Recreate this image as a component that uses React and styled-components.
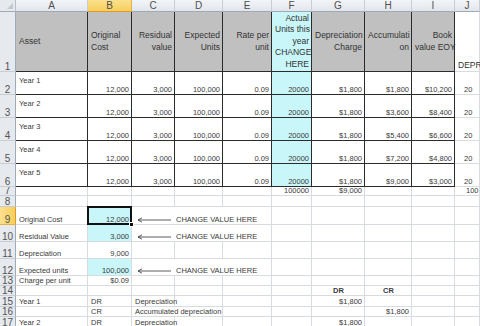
import React from "react";
import styled, { createGlobalStyle } from "styled-components";

const GlobalStyle = createGlobalStyle`
  *, *::before, *::after { box-sizing: border-box; }
  html, body { margin: 0; padding: 0; background: #fff; }
  body {
    width: 480px;
    height: 326px;
    overflow: hidden;
    font-family: "Liberation Sans", Arial, sans-serif;
  }
`;

const GRAY = "#c0c0c0";
const CYAN = "#c9f6f8";
const COLS = ["A", "B", "C", "D", "E", "F", "G", "H", "I", "J"];
const ROW_H = [60, 23, 23, 23, 23, 23, 9, 11, 18, 17, 17, 17, 10, 10, 11, 10, 11];

const Sheet = styled.div`
  display: grid;
  grid-template-columns: 16px 72px 44px 43px 48px 49px 40px 53px 47px 43px 1fr;
  grid-template-rows: 12px ${ROW_H.map((h) => h + "px").join(" ")};
  width: 480px;
  height: 326px;
  overflow: hidden;
  color: #3a3a3a;
`;

const Corner = styled.div`
  position: relative;
  background: #e6e9ed;
  border-right: 1px solid #b7bec8;
  border-bottom: 1px solid #9eaab8;

  &::after {
    content: "";
    position: absolute;
    right: 2px;
    bottom: 2px;
    border-left: 6px solid transparent;
    border-bottom: 6px solid #c3c8cf;
  }
`;

const ColHead = styled.div`
  display: flex;
  align-items: center;
  justify-content: center;
  font-size: 10px;
  line-height: 11px;
  color: #505050;
  background: ${(p) => (p.$active ? "linear-gradient(#fbe08f, #f6cf5a)" : "linear-gradient(#f2f4f7, #e2e6eb)")};
  border-right: 1px solid ${(p) => (p.$active ? "#e2b24c" : "#c8cdd4")};
  border-bottom: 1px solid ${(p) => (p.$active ? "#e09a2c" : "#9eaab8")};
`;

const RowHead = styled.div`
  display: flex;
  align-items: flex-end;
  justify-content: center;
  font-size: 10px;
  line-height: 9px;
  color: #555;
  overflow: hidden;
  background: ${(p) => (p.$active ? "linear-gradient(90deg, #fbe08f, #f6cf5a)" : "#e6e9ed")};
  border-right: 1px solid ${(p) => (p.$active ? "#e09a2c" : "#9eaab8")};
  border-bottom: 1px solid ${(p) => (p.$active ? "#e2b24c" : "#c8cdd4")};
`;

const V_ALIGN = { top: "flex-start", center: "center", bottom: "flex-end" };

const Cell = styled.div`
  position: relative;
  grid-column: span ${(p) => p.$span};
  display: flex;
  flex-direction: column;
  justify-content: ${(p) => V_ALIGN[p.$v]};
  text-align: ${(p) => p.$align};
  padding: ${(p) => (p.$v === "top" ? "4px 2px 0 3px" : "0 2px 0 3px")};
  padding-left: ${(p) => (p.$indent ? p.$indent + "px" : "3px")};
  background: ${(p) => p.$bg || "transparent"};
  border-right: 1px solid ${(p) => (p.$dark ? "#2b2b2b" : "#d8dbdf")};
  border-bottom: 1px solid ${(p) => (p.$dark ? "#2b2b2b" : "#d8dbdf")};
  font-size: 7.5px;
  line-height: 9px;
  font-weight: ${(p) => (p.$bold ? 700 : 400)};
  white-space: nowrap;
  min-width: 0;
`;

const TitleCell = styled(Cell)`
  font-size: 8.5px;
  line-height: 11.5px;
  color: #333;
`;

const Selected = styled(Cell)`
  &::after {
    content: "";
    position: absolute;
    inset: -1px;
    border: 2px solid #111;
    z-index: 2;
  }
  &::before {
    content: "";
    position: absolute;
    right: -3px;
    bottom: -3px;
    width: 5px;
    height: 5px;
    background: #111;
    border: 1px solid #fff;
    z-index: 3;
  }
`;

const Note = styled.span`
  display: flex;
  align-items: center;
  gap: 5px;
  padding-left: 2px;
`;

const Arrow = () => (
  <svg width="34" height="6" viewBox="0 0 34 6">
    <path d="M1 3H34M1 3L5 0.8M1 3L5 5.2" stroke="#333" strokeWidth="0.8" fill="none" />
  </svg>
);

const change = {
  t: (
    <Note>
      <Arrow />
      CHANGE VALUE HERE
    </Note>
  ),
  span: 3,
};

const E = {};
const r = (v) => ({ t: v, a: "right" });

const HEADER = [
  { t: ["Asset"], bg: GRAY },
  { t: ["Original", "Cost"], bg: GRAY },
  { t: ["Residual", "value"], a: "right", bg: GRAY },
  { t: ["Expected", "Units"], a: "right", bg: GRAY },
  { t: ["Rate per", "unit"], a: "right", bg: GRAY },
  { t: ["Actual", "Units this", "year", "CHANGE", "HERE"], a: "right", bg: CYAN },
  { t: ["Depreciation", "Charge"], a: "right", bg: GRAY },
  { t: ["Accumulati", "on"], a: "right", bg: GRAY },
  { t: ["Book", "value EOY"], a: "right", bg: GRAY },
  { t: ["DEPRECIATION"], v: "bottom" },
];

const YEARS = [
  ["$1,800", "$10,200"],
  ["$3,600", "$8,400"],
  ["$5,400", "$6,600"],
  ["$7,200", "$4,800"],
  ["$9,000", "$3,000"],
].map(([acc, book], i) => [
  { t: `Year ${i + 1}`, v: "top" },
  r("12,000"),
  r("3,000"),
  r("100,000"),
  r("0.09"),
  { t: "20000", a: "right", bg: CYAN },
  r("$1,800"),
  r(acc),
  r(book),
  { t: "20", indent: 9 },
]);

const ROWS = [
  ...YEARS,
  [E, E, E, E, E, r("100000"), r("$9,000"), E, E, { t: "100", indent: 11 }],
  [E, E, E, E, E, E, E, E, E, E],
  [{ t: "Original Cost" }, { t: "12,000", a: "right", bg: CYAN, sel: true }, change, E, E, E, E, E],
  [{ t: "Residual Value" }, { t: "3,000", a: "right", bg: CYAN }, change, E, E, E, E, E],
  [{ t: "Depreciation" }, r("9,000"), E, E, E, E, E, E, E, E],
  [{ t: "Expected units" }, { t: "100,000", a: "right", bg: CYAN }, change, E, E, E, E, E],
  [{ t: "Charge per unit" }, r("$0.09"), E, E, E, E, E, E, E, E],
  [E, E, E, E, E, E, { t: "DR", a: "center", bold: true }, { t: "CR", a: "center", bold: true }, E, E],
  [{ t: "Year 1" }, { t: "DR" }, { t: "Depreciation" }, E, E, E, r("$1,800"), E, E, E],
  [E, { t: "CR" }, { t: "Accumulated depreciation", span: 2 }, E, E, E, r("$1,800"), E, E],
  [{ t: "Year 2" }, { t: "DR" }, { t: "Depreciation" }, E, E, E, r("$1,800"), E, E, E],
];

const cellProps = (c, col, darkRow) => ({
  $span: c.span || 1,
  $align: c.a || "left",
  $v: c.v || "bottom",
  $bg: c.bg,
  $bold: c.bold,
  $indent: c.indent,
  $dark: darkRow && col < 9,
});

const App = () => {
  return (
    <>
      <GlobalStyle />
      <Sheet>
        <Corner />
        {COLS.map((c) => (
          <ColHead key={c} $active={c === "B"}>
            {c}
          </ColHead>
        ))}

        <RowHead>1</RowHead>
        {HEADER.map((c, i) => (
          <TitleCell key={i} {...cellProps({ v: "center", ...c }, i, true)}>
            {c.t.map((line, j) => (
              <div key={j}>{line}</div>
            ))}
          </TitleCell>
        ))}

        {ROWS.map((row, ri) => {
          const num = ri + 2;
          const darkRow = num <= 6;
          let col = 0;
          return (
            <React.Fragment key={num}>
              <RowHead $active={num === 9}>{num}</RowHead>
              {row.map((c, i) => {
                const props = cellProps(c, col, darkRow);
                col += c.span || 1;
                const Comp = c.sel ? Selected : Cell;
                return (
                  <Comp key={i} {...props}>
                    {c.t}
                  </Comp>
                );
              })}
            </React.Fragment>
          );
        })}
      </Sheet>
    </>
  );
};

export default App;
